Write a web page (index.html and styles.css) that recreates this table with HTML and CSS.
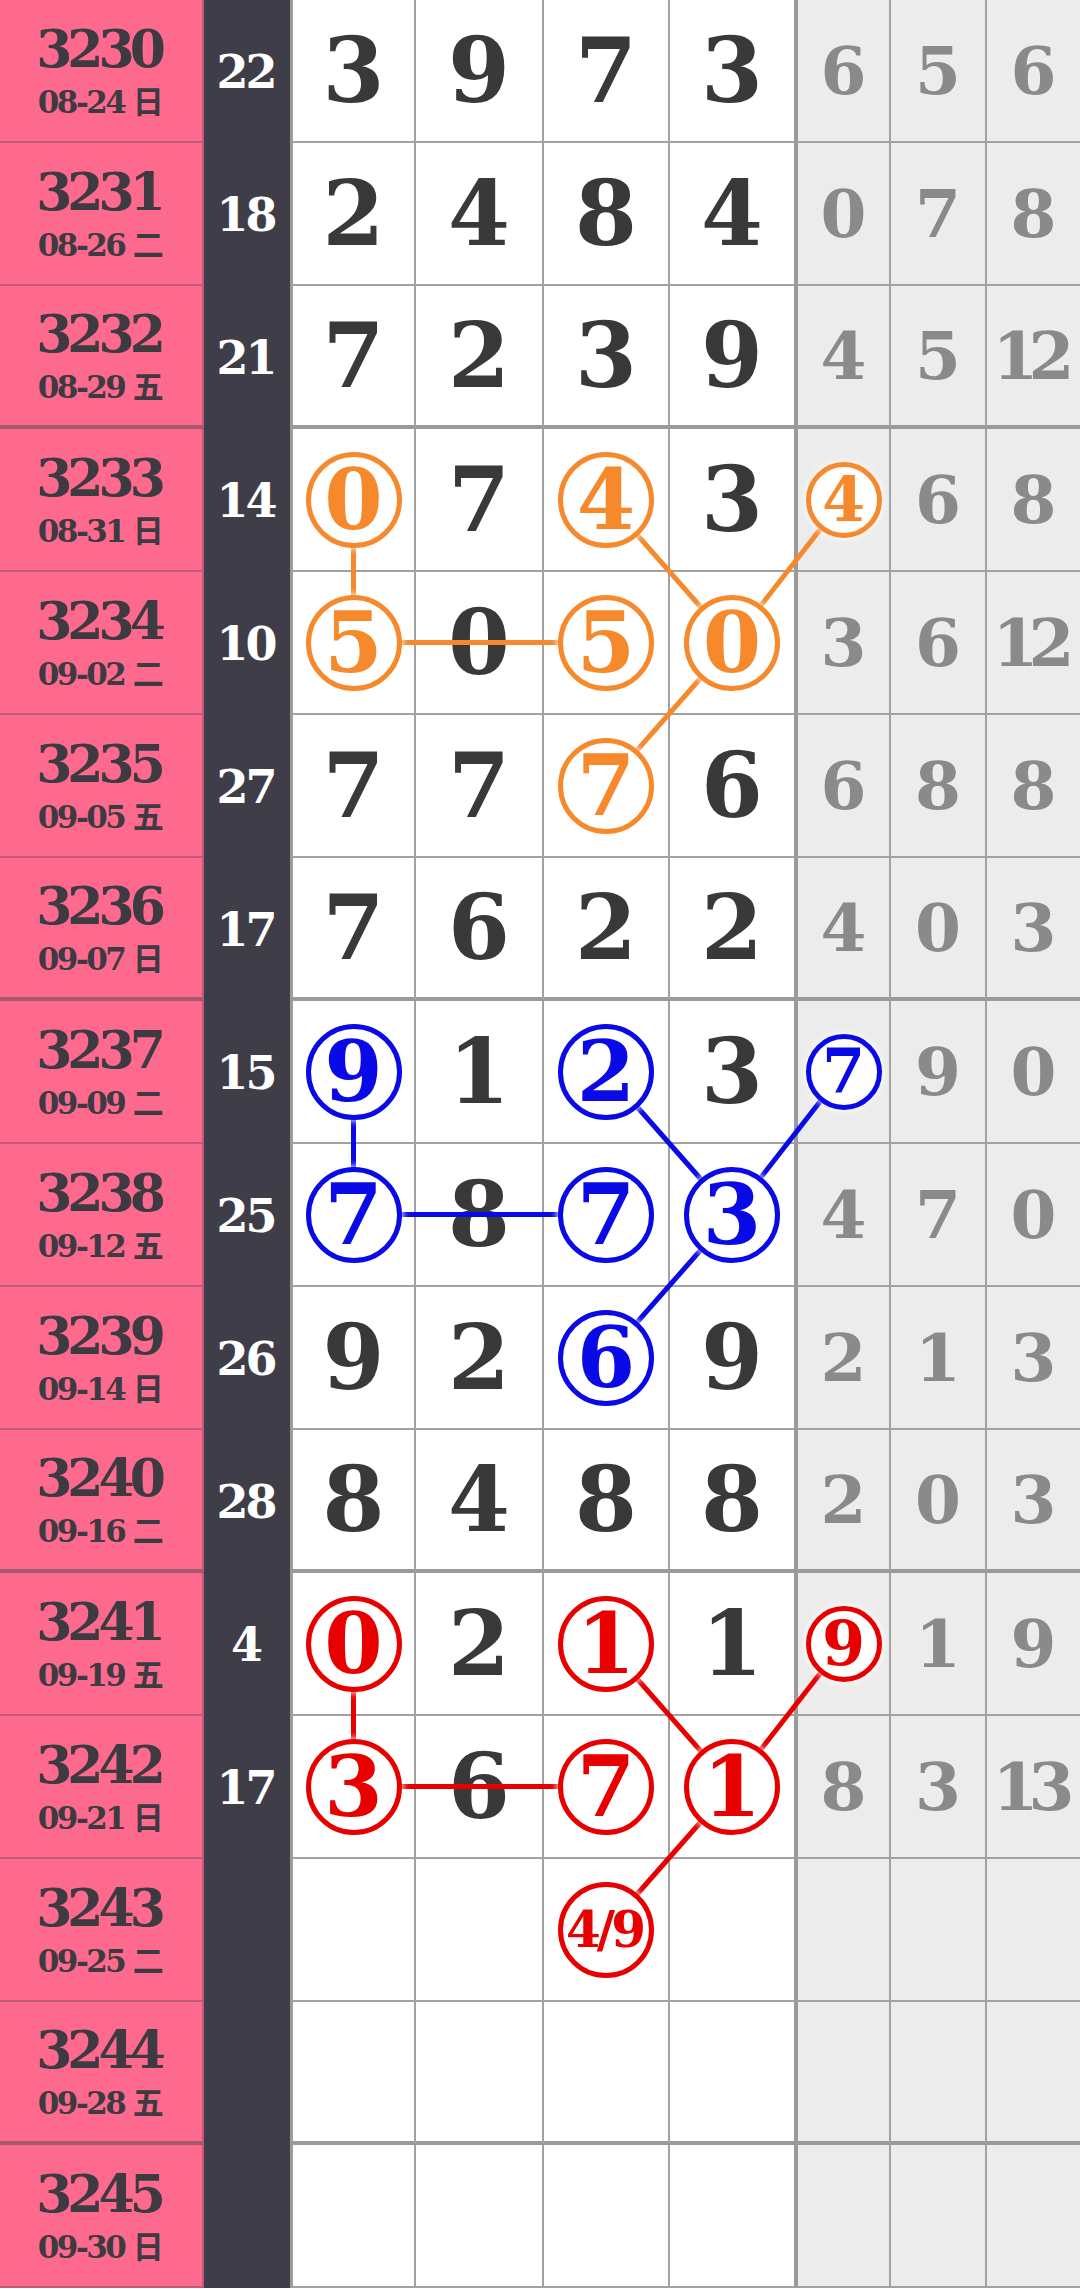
FILE: index.html
```html
<!DOCTYPE html>
<html lang="zh">
<head>
    <meta charset="UTF-8">
    <meta name="viewport" content="width=device-width, initial-scale=1.0">
    <title>走势图</title>
    <link rel="stylesheet" href="styles.css">
</head>
<body>
    <div class="chart">
        <div class="row">
            <div class="cell period"><span class="no">3230</span><span class="date">08-24 日</span></div>
            <div class="cell sum">22</div>
            <div class="cell digit d1">3</div><div class="cell digit">9</div><div class="cell digit">7</div><div class="cell digit d4">3</div>
            <div class="cell gap">6</div><div class="cell gap">5</div><div class="cell gap g3">6</div>
        </div>
        <div class="row">
            <div class="cell period"><span class="no">3231</span><span class="date">08-26 二</span></div>
            <div class="cell sum">18</div>
            <div class="cell digit d1">2</div><div class="cell digit">4</div><div class="cell digit">8</div><div class="cell digit d4">4</div>
            <div class="cell gap">0</div><div class="cell gap">7</div><div class="cell gap g3">8</div>
        </div>
        <div class="row split">
            <div class="cell period"><span class="no">3232</span><span class="date">08-29 五</span></div>
            <div class="cell sum">21</div>
            <div class="cell digit d1">7</div><div class="cell digit">2</div><div class="cell digit">3</div><div class="cell digit d4">9</div>
            <div class="cell gap">4</div><div class="cell gap">5</div><div class="cell gap g3 wide">12</div>
        </div>

        <!-- orange group -->
        <div class="row">
            <div class="cell period"><span class="no">3233</span><span class="date">08-31 日</span></div>
            <div class="cell sum">14</div>
            <div class="cell digit d1"><span class="ring orange">0</span></div><div class="cell digit">7</div><div class="cell digit"><span class="ring orange">4</span></div><div class="cell digit d4">3</div>
            <div class="cell gap"><span class="ring small orange">4</span></div><div class="cell gap">6</div><div class="cell gap g3">8</div>
        </div>
        <div class="row">
            <div class="cell period"><span class="no">3234</span><span class="date">09-02 二</span></div>
            <div class="cell sum">10</div>
            <div class="cell digit d1"><span class="ring orange">5</span></div><div class="cell digit">0</div><div class="cell digit"><span class="ring orange">5</span></div><div class="cell digit d4"><span class="ring orange">0</span></div>
            <div class="cell gap">3</div><div class="cell gap">6</div><div class="cell gap g3 wide">12</div>
        </div>
        <div class="row">
            <div class="cell period"><span class="no">3235</span><span class="date">09-05 五</span></div>
            <div class="cell sum">27</div>
            <div class="cell digit d1">7</div><div class="cell digit">7</div><div class="cell digit"><span class="ring orange">7</span></div><div class="cell digit d4">6</div>
            <div class="cell gap">6</div><div class="cell gap">8</div><div class="cell gap g3">8</div>
        </div>
        <div class="row split">
            <div class="cell period"><span class="no">3236</span><span class="date">09-07 日</span></div>
            <div class="cell sum">17</div>
            <div class="cell digit d1">7</div><div class="cell digit">6</div><div class="cell digit">2</div><div class="cell digit d4">2</div>
            <div class="cell gap">4</div><div class="cell gap">0</div><div class="cell gap g3">3</div>
        </div>

        <!-- blue group -->
        <div class="row">
            <div class="cell period"><span class="no">3237</span><span class="date">09-09 二</span></div>
            <div class="cell sum">15</div>
            <div class="cell digit d1"><span class="ring blue">9</span></div><div class="cell digit">1</div><div class="cell digit"><span class="ring blue">2</span></div><div class="cell digit d4">3</div>
            <div class="cell gap"><span class="ring small blue">7</span></div><div class="cell gap">9</div><div class="cell gap g3">0</div>
        </div>
        <div class="row">
            <div class="cell period"><span class="no">3238</span><span class="date">09-12 五</span></div>
            <div class="cell sum">25</div>
            <div class="cell digit d1"><span class="ring blue">7</span></div><div class="cell digit">8</div><div class="cell digit"><span class="ring blue">7</span></div><div class="cell digit d4"><span class="ring blue">3</span></div>
            <div class="cell gap">4</div><div class="cell gap">7</div><div class="cell gap g3">0</div>
        </div>
        <div class="row">
            <div class="cell period"><span class="no">3239</span><span class="date">09-14 日</span></div>
            <div class="cell sum">26</div>
            <div class="cell digit d1">9</div><div class="cell digit">2</div><div class="cell digit"><span class="ring blue">6</span></div><div class="cell digit d4">9</div>
            <div class="cell gap">2</div><div class="cell gap">1</div><div class="cell gap g3">3</div>
        </div>
        <div class="row split">
            <div class="cell period"><span class="no">3240</span><span class="date">09-16 二</span></div>
            <div class="cell sum">28</div>
            <div class="cell digit d1">8</div><div class="cell digit">4</div><div class="cell digit">8</div><div class="cell digit d4">8</div>
            <div class="cell gap">2</div><div class="cell gap">0</div><div class="cell gap g3">3</div>
        </div>

        <!-- red group -->
        <div class="row">
            <div class="cell period"><span class="no">3241</span><span class="date">09-19 五</span></div>
            <div class="cell sum">4</div>
            <div class="cell digit d1"><span class="ring red">0</span></div><div class="cell digit">2</div><div class="cell digit"><span class="ring red">1</span></div><div class="cell digit d4">1</div>
            <div class="cell gap"><span class="ring small red">9</span></div><div class="cell gap">1</div><div class="cell gap g3">9</div>
        </div>
        <div class="row">
            <div class="cell period"><span class="no">3242</span><span class="date">09-21 日</span></div>
            <div class="cell sum">17</div>
            <div class="cell digit d1"><span class="ring red">3</span></div><div class="cell digit">6</div><div class="cell digit"><span class="ring red">7</span></div><div class="cell digit d4"><span class="ring red">1</span></div>
            <div class="cell gap">8</div><div class="cell gap">3</div><div class="cell gap g3 wide">13</div>
        </div>
        <div class="row">
            <div class="cell period"><span class="no">3243</span><span class="date">09-25 二</span></div>
            <div class="cell sum"></div>
            <div class="cell digit d1"></div><div class="cell digit"></div><div class="cell digit"><span class="ring pair red">4/9</span></div><div class="cell digit d4"></div>
            <div class="cell gap"></div><div class="cell gap"></div><div class="cell gap g3"></div>
        </div>
        <div class="row split">
            <div class="cell period"><span class="no">3244</span><span class="date">09-28 五</span></div>
            <div class="cell sum"></div>
            <div class="cell digit d1"></div><div class="cell digit"></div><div class="cell digit"></div><div class="cell digit d4"></div>
            <div class="cell gap"></div><div class="cell gap"></div><div class="cell gap g3"></div>
        </div>
        <div class="row">
            <div class="cell period"><span class="no">3245</span><span class="date">09-30 日</span></div>
            <div class="cell sum"></div>
            <div class="cell digit d1"></div><div class="cell digit"></div><div class="cell digit"></div><div class="cell digit d4"></div>
            <div class="cell gap"></div><div class="cell gap"></div><div class="cell gap g3"></div>
        </div>

        <!-- connecting lines, drawn under the rings -->
        <svg class="links" width="1080" height="2288" viewBox="0 0 1080 2288">
            <g stroke="#f5892b" stroke-width="5">
                <line x1="353.5" y1="499.5" x2="353.5" y2="642.5"/>
                <line x1="353.5" y1="642.5" x2="606" y2="642.5"/>
                <line x1="606" y1="499.5" x2="732" y2="642.5"/>
                <line x1="732" y1="642.5" x2="843.5" y2="499.5"/>
                <line x1="732" y1="642.5" x2="606" y2="785.5"/>
            </g>
            <g stroke="#0a0ae6" stroke-width="5">
                <line x1="353.5" y1="1071.5" x2="353.5" y2="1214.5"/>
                <line x1="353.5" y1="1214.5" x2="606" y2="1214.5"/>
                <line x1="606" y1="1071.5" x2="732" y2="1214.5"/>
                <line x1="732" y1="1214.5" x2="843.5" y2="1071.5"/>
                <line x1="732" y1="1214.5" x2="606" y2="1357.5"/>
            </g>
            <g stroke="#e80000" stroke-width="5">
                <line x1="353.5" y1="1643.5" x2="353.5" y2="1786.5"/>
                <line x1="353.5" y1="1786.5" x2="606" y2="1786.5"/>
                <line x1="606" y1="1643.5" x2="732" y2="1786.5"/>
                <line x1="732" y1="1786.5" x2="843.5" y2="1643.5"/>
                <line x1="732" y1="1786.5" x2="606" y2="1929.5"/>
            </g>
        </svg>
    </div>
</body>
</html>
```

FILE: styles.css
```css
body {
    margin: 0;
    background: #fff;
    font-family: "DejaVu Serif", "Noto Sans CJK SC", serif;
    font-weight: bold;
}
.chart {
    position: relative;
    width: 1080px;
}
.row {
    display: grid;
    grid-template-columns: 204px 86px 126px 128px 126px 128px 93px 96px 93px;
    height: 143px;
}
.cell {
    box-sizing: border-box;
    display: flex;
    align-items: center;
    justify-content: center;
    border-right: 2px solid #a2a2a2;
    border-bottom: 2px solid #a2a2a2;
    line-height: 1;
}
/* Period + date column */
.period {
    flex-direction: column;
    gap: 12px;
    background-color: #fe6a8e;
    color: #3d3a42;
    border-right: 2px solid #c2587a;
    border-bottom-color: #c2587a;
}
.period .no {
    font-size: 52px;
    letter-spacing: -5px;
    padding-right: 5px;
}
.period .date {
    font-size: 31px;
    letter-spacing: -2.5px;
    padding-right: 3px;
}
/* Sum column */
.sum {
    background-color: #3f3e48;
    color: #fff;
    font-size: 46px;
    letter-spacing: -3px;
    padding-right: 3px;
}
/* Draw digits */
.digit {
    background-color: #fff;
    color: #393939;
    font-size: 89px;
}
.d1 {
    border-left: 3px solid #9c9c9c;
}
.d4 {
    border-right: 4px solid #9a9a9a;
}
/* Gap columns */
.gap {
    background-color: #ececec;
    color: #8a8a8a;
    font-size: 66px;
}
.gap.wide {
    letter-spacing: -10px;
    padding-right: 10px;
}
.g3 {
    border-right: none;
}
/* Group separators */
.split .cell {
    border-bottom-width: 4px;
    border-bottom-color: #9a9a9a;
}
.split .period {
    border-bottom-color: #a4586c;
}
.sum,
.split .sum {
    border: none;
}
/* Circled numbers */
.ring {
    position: relative;
    z-index: 2;
    box-sizing: border-box;
    display: flex;
    align-items: center;
    justify-content: center;
    width: 96px;
    height: 96px;
    border: 5px solid currentColor;
    border-radius: 50%;
    background-color: #fff;
    font-size: 84px;
    letter-spacing: 0;
    box-shadow: 0 0 6px 1px rgba(255, 255, 255, 0.9);
}
.ring.small {
    width: 76px;
    height: 76px;
    font-size: 62px;
}
.ring.pair {
    font-size: 50px;
    letter-spacing: -4px;
    padding-right: 4px;
    padding-left: 0;
}
.orange {
    color: #f5892b;
}
.blue {
    color: #0a0ae6;
}
.red {
    color: #e80000;
}
.links {
    position: absolute;
    top: 0;
    left: 0;
    z-index: 1;
    pointer-events: none;
}
```
